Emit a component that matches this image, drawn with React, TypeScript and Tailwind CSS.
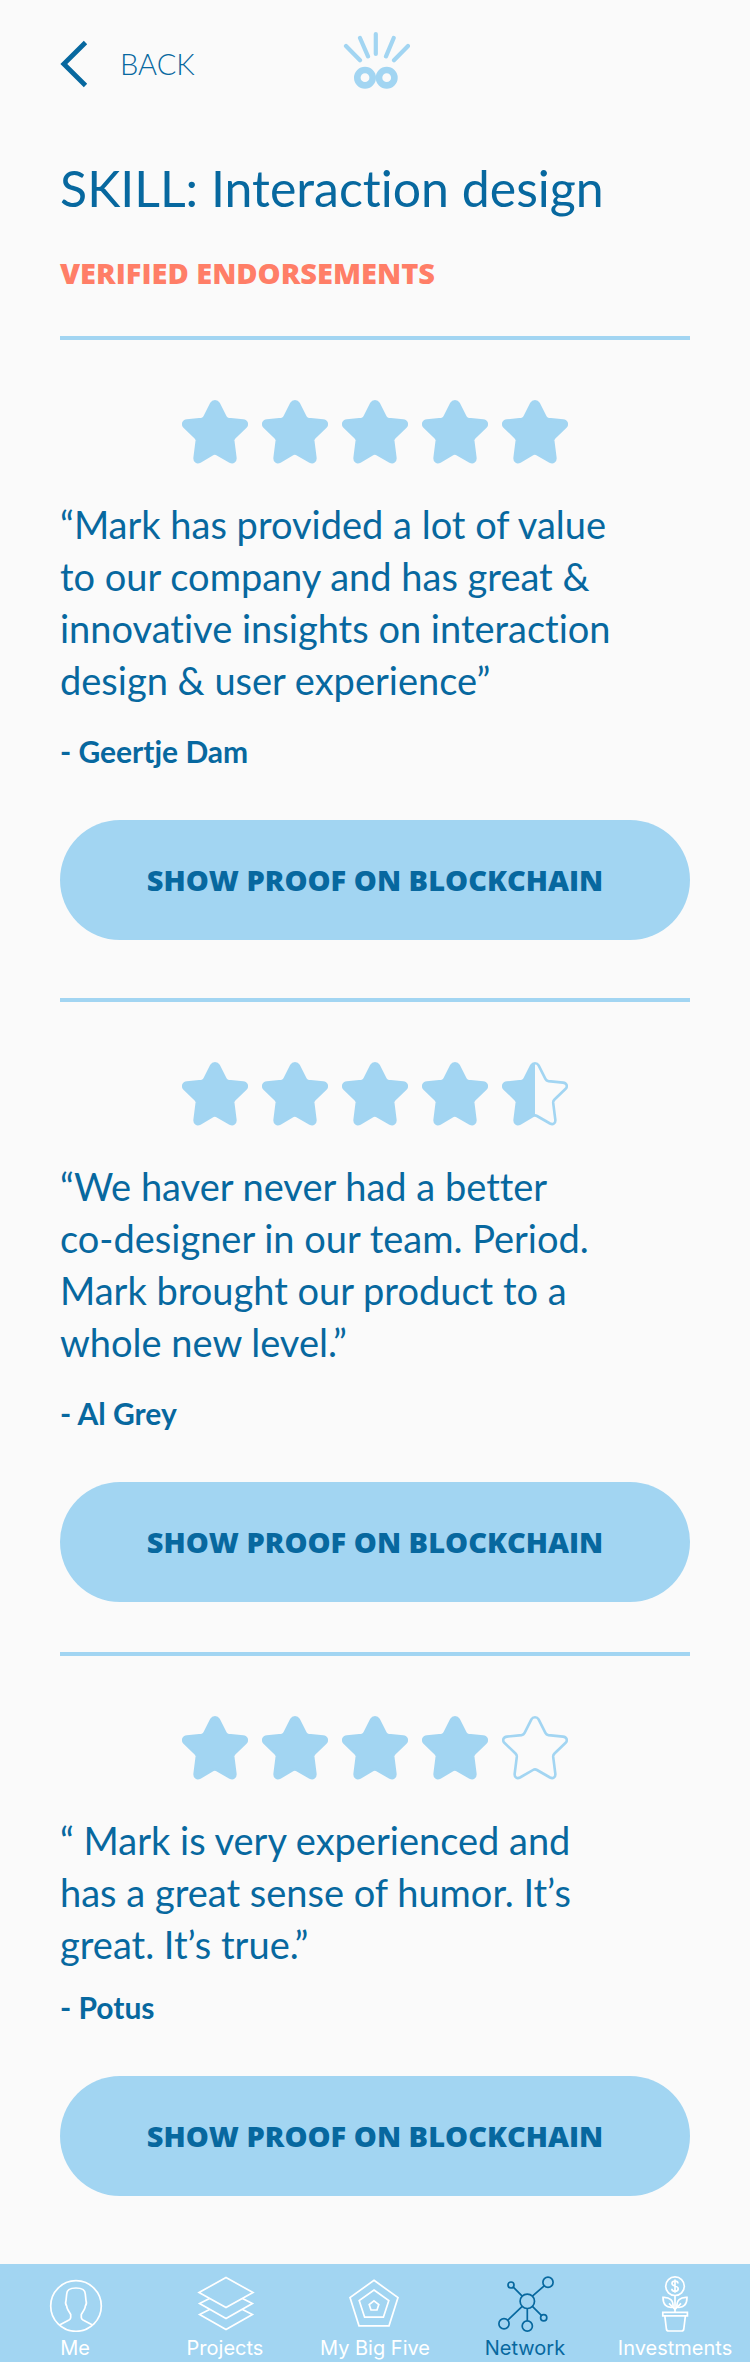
import type { ReactNode } from "react";

const STAR_PATH =
  "M29.4 3.4C31 .6 35 .6 36.6 3.4L43.4 16.9Q44.3 18.8 46.4 19.1L61 20.6C64.8 21 66 24.5 63.4 27L52.5 37.5Q51 39 51.2 41L53.3 57.5C53.8 61.3 51 63 48 61.5L35 54Q33 52.8 31 54L18 61.5C15 63 12.2 61.3 12.7 57.5L14.8 41Q15 39 13.5 37.5L2.6 27C0 24.5 1.2 21 5 20.6L19.6 19.1Q21.7 18.8 22.6 16.9Z";
const HALF_STAR_PATH =
  "M33 1.3C31.6 1.3 30.2 2 29.4 3.4L22.6 16.9Q21.7 18.8 19.6 19.1L5 20.6C1.2 21 0 24.5 2.6 27L13.5 37.5Q15 39 14.8 41L12.7 57.5C12.2 61.3 15 63 18 61.5L31 54Q32 53.4 33 53.4Z";

type Fill = "full" | "half" | "empty";

function Star({ fill }: { fill: Fill }) {
  return (
    <svg viewBox="0 0 66 64" className="h-16 w-[66px]" aria-hidden="true">
      <path
        d={STAR_PATH}
        fill={fill === "full" ? "#a2d5f2" : "none"}
        stroke="#a2d5f2"
        strokeWidth="2.6"
        strokeLinejoin="round"
      />
      {fill === "half" && <path d={HALF_STAR_PATH} fill="#a2d5f2" />}
    </svg>
  );
}

function Rating({ value }: { value: number }) {
  return (
    <div role="img" aria-label={`${value} out of 5 stars`} className="flex justify-center gap-[14px]">
      {[1, 2, 3, 4, 5].map((n) => (
        <Star key={n} fill={value >= n ? "full" : value >= n - 0.5 ? "half" : "empty"} />
      ))}
    </div>
  );
}

type EndorsementData = { rating: number; lines: string[]; author: string; compact?: boolean };

const endorsements: EndorsementData[] = [
  {
    rating: 5,
    lines: [
      "“Mark has provided a lot of value",
      "to our company and has great &",
      "innovative insights on interaction",
      "design & user experience”",
    ],
    author: "- Geertje Dam",
  },
  {
    rating: 4.5,
    lines: [
      "“We haver never had a better",
      "co-designer in our team. Period.",
      "Mark brought our product to a",
      "whole new level.”",
    ],
    author: "- Al Grey",
  },
  {
    rating: 4,
    lines: ["“ Mark is very experienced and", "has a great sense of humor. It’s", "great. It’s true.”"],
    author: "- Potus",
    compact: true,
  },
];

function Endorsement({ rating, lines, author, compact }: EndorsementData) {
  return (
    <article className={`border-t-4 border-[#a2d5f2] pt-[60px] first:mt-0 ${compact ? "mt-[50px]" : "mt-[58px]"}`}>
      <Rating value={rating} />
      <blockquote className="mt-[34px] text-[38px] leading-[52px]">
        {lines.map((line) => (
          <span key={line} className="block">
            {line}
          </span>
        ))}
      </blockquote>
      <p className={`text-[30px] leading-9 font-bold ${compact ? "mt-[19px]" : "mt-[27px]"}`}>{author}</p>
      <button
        type="button"
        className="mt-[51px] flex h-[120px] w-full items-center justify-center rounded-full bg-[#a2d5f2] font-['Open_Sans',sans-serif] text-[29px] font-extrabold"
      >
        SHOW PROOF ON BLOCKCHAIN
      </button>
    </article>
  );
}

function NavIcon({ children }: { children: ReactNode }) {
  return (
    <svg
      viewBox="0 0 60 56"
      className="h-14 w-[60px]"
      fill="none"
      stroke="currentColor"
      strokeWidth="1.7"
      aria-hidden="true"
    >
      {children}
    </svg>
  );
}

const navItems: { label: string; active?: boolean; icon: ReactNode }[] = [
  {
    label: "Me",
    icon: (
      <>
        <circle cx="31" cy="30" r="25.3" />
        <path d="M15 48.8 24 44Q25.7 43 25.7 41.5V38.5C23.5 35 21.7 32.5 21.7 30C20.4 28.5 20.5 26 21 24.5L21.7 18C21.7 13.5 25 12 31 12S40.3 13.5 40.3 18L41 24.5C41.5 26 41.6 28.5 40.3 30C40.3 32.5 38.5 35 36.3 38.5V41.5Q36.3 43 38 44L47 48.8" />
      </>
    ),
  },
  {
    label: "Projects",
    icon: (
      <>
        <path d="M31 1.4 58 16.6 31 31.6 4 16.6Z" />
        <path d="M14.5 22.4 4.6 27.5 31 42.4 57.4 27.5 47.5 22.4" />
        <path d="M14.5 33.4 4.6 38.6 31 53.6 57.4 38.6 47.5 33.4" />
      </>
    ),
  },
  {
    label: "My Big Five",
    icon: (
      <>
        <path d="M29 4.3 53 21.6 44 49.8H14L5 21.6Z" />
        <path d="M29 14 43.8 24.6 38.4 41.2H19.6L14.2 24.6Z" />
        <path d="M29 24.8 33.8 28.6 32 34H26L24.2 28.6Z" />
      </>
    ),
  },
  {
    label: "Network",
    active: true,
    icon: (
      <>
        <circle cx="32.3" cy="25.3" r="7.2" />
        <circle cx="16" cy="9" r="3" />
        <circle cx="53" cy="6.2" r="5.1" />
        <circle cx="9" cy="47.8" r="5.1" />
        <circle cx="32.3" cy="50" r="5.1" />
        <circle cx="48.7" cy="41.7" r="3.1" />
        <path d="M18.3 11.2 27.2 20.2M49.2 9.8 37.4 20.2M27.2 30.4 12.8 44.2M32.3 32.5V44.8M37.4 30.4 46.4 39.4" />
      </>
    ),
  },
  {
    label: "Investments",
    icon: (
      <>
        <circle cx="30" cy="10.2" r="9.3" />
        <path d="M33 7.6C33 5.8 31.8 5 30 5S27 5.8 27 7.4C27 11 33.2 9 33.2 12.8C33.2 14.4 31.9 15.3 30 15.3S26.8 14.4 26.8 12.7M30 3.6V16.8" />
        <path d="M30 19.5V36.3" />
        <path d="M18 21.4C25 21 28.6 24.5 28 31.2C21 32.2 18 28 18 21.4ZM42 21.4C35 21 31.4 24.5 32 31.2C39 32.2 42 28 42 21.4Z" />
        <path d="M24 27.4 30 33.4 36 27.4" />
        <path d="M17.8 36.4H42.4V39.8H17.8ZM19.8 39.8 21.4 53Q21.7 55 23.6 55H36.6Q38.5 55 38.8 53L40.4 39.8" />
      </>
    ),
  },
];

function Logo() {
  return (
    <svg viewBox="0 0 70 60" className="h-[60px] w-[70px]" fill="none" stroke="#a2d5f2" role="img" aria-label="Home">
      <g strokeWidth="6.6">
        <circle cx="25" cy="47.7" r="7.7" />
        <circle cx="46.7" cy="47.7" r="7.7" />
      </g>
      <path
        d="M35.8 4V24M20 8 28 26.4M6 16 20 30.2M53.7 8 46 26.4M68 16 54 30.2"
        strokeWidth="4.2"
        strokeLinecap="round"
      />
    </svg>
  );
}

export default function App() {
  return (
    <div className="flex min-h-screen flex-col bg-[#fafafa] font-['Lato',sans-serif] text-[#07689f] [font-variant-ligatures:none]">
      <header className="grid grid-cols-3 items-center px-[60px] pt-[30px]">
        <a href="#back" className="flex items-center gap-8 pt-2 text-[29px] leading-9 font-light">
          <svg viewBox="0 0 28 48" className="h-12 w-7" fill="none" stroke="currentColor" strokeWidth="4.8" aria-hidden="true">
            <path d="M25.5 2.5 3.8 24 25.5 45.5" />
          </svg>
          BACK
        </a>
        <div className="flex justify-center">
          <Logo />
        </div>
      </header>

      <main className="flex-1 px-[60px]">
        <h1 className="mt-[66px] text-[50px] leading-[64px]">SKILL: Interaction design</h1>
        <h2 className="mt-[35px] font-['Open_Sans',sans-serif] text-[29px] leading-9 font-extrabold text-[#ff7e67]">
          VERIFIED ENDORSEMENTS
        </h2>
        <div className="mt-[45px]">
          {endorsements.map((item) => (
            <Endorsement key={item.author} {...item} />
          ))}
        </div>
      </main>

      <nav className="mt-[68px] grid grid-cols-5 bg-[#a2d5f2] pt-3 font-['Inter',sans-serif] text-white">
        {navItems.map(({ label, active, icon }) => (
          <a
            key={label}
            href={`#${label.toLowerCase().replaceAll(" ", "-")}`}
            aria-current={active ? "page" : undefined}
            className={`flex flex-col items-center gap-1 pb-0.5 text-[20px] leading-6 whitespace-nowrap ${active ? "text-[#07689f]" : ""}`}
          >
            <NavIcon>{icon}</NavIcon>
            {label}
          </a>
        ))}
      </nav>
    </div>
  );
}
